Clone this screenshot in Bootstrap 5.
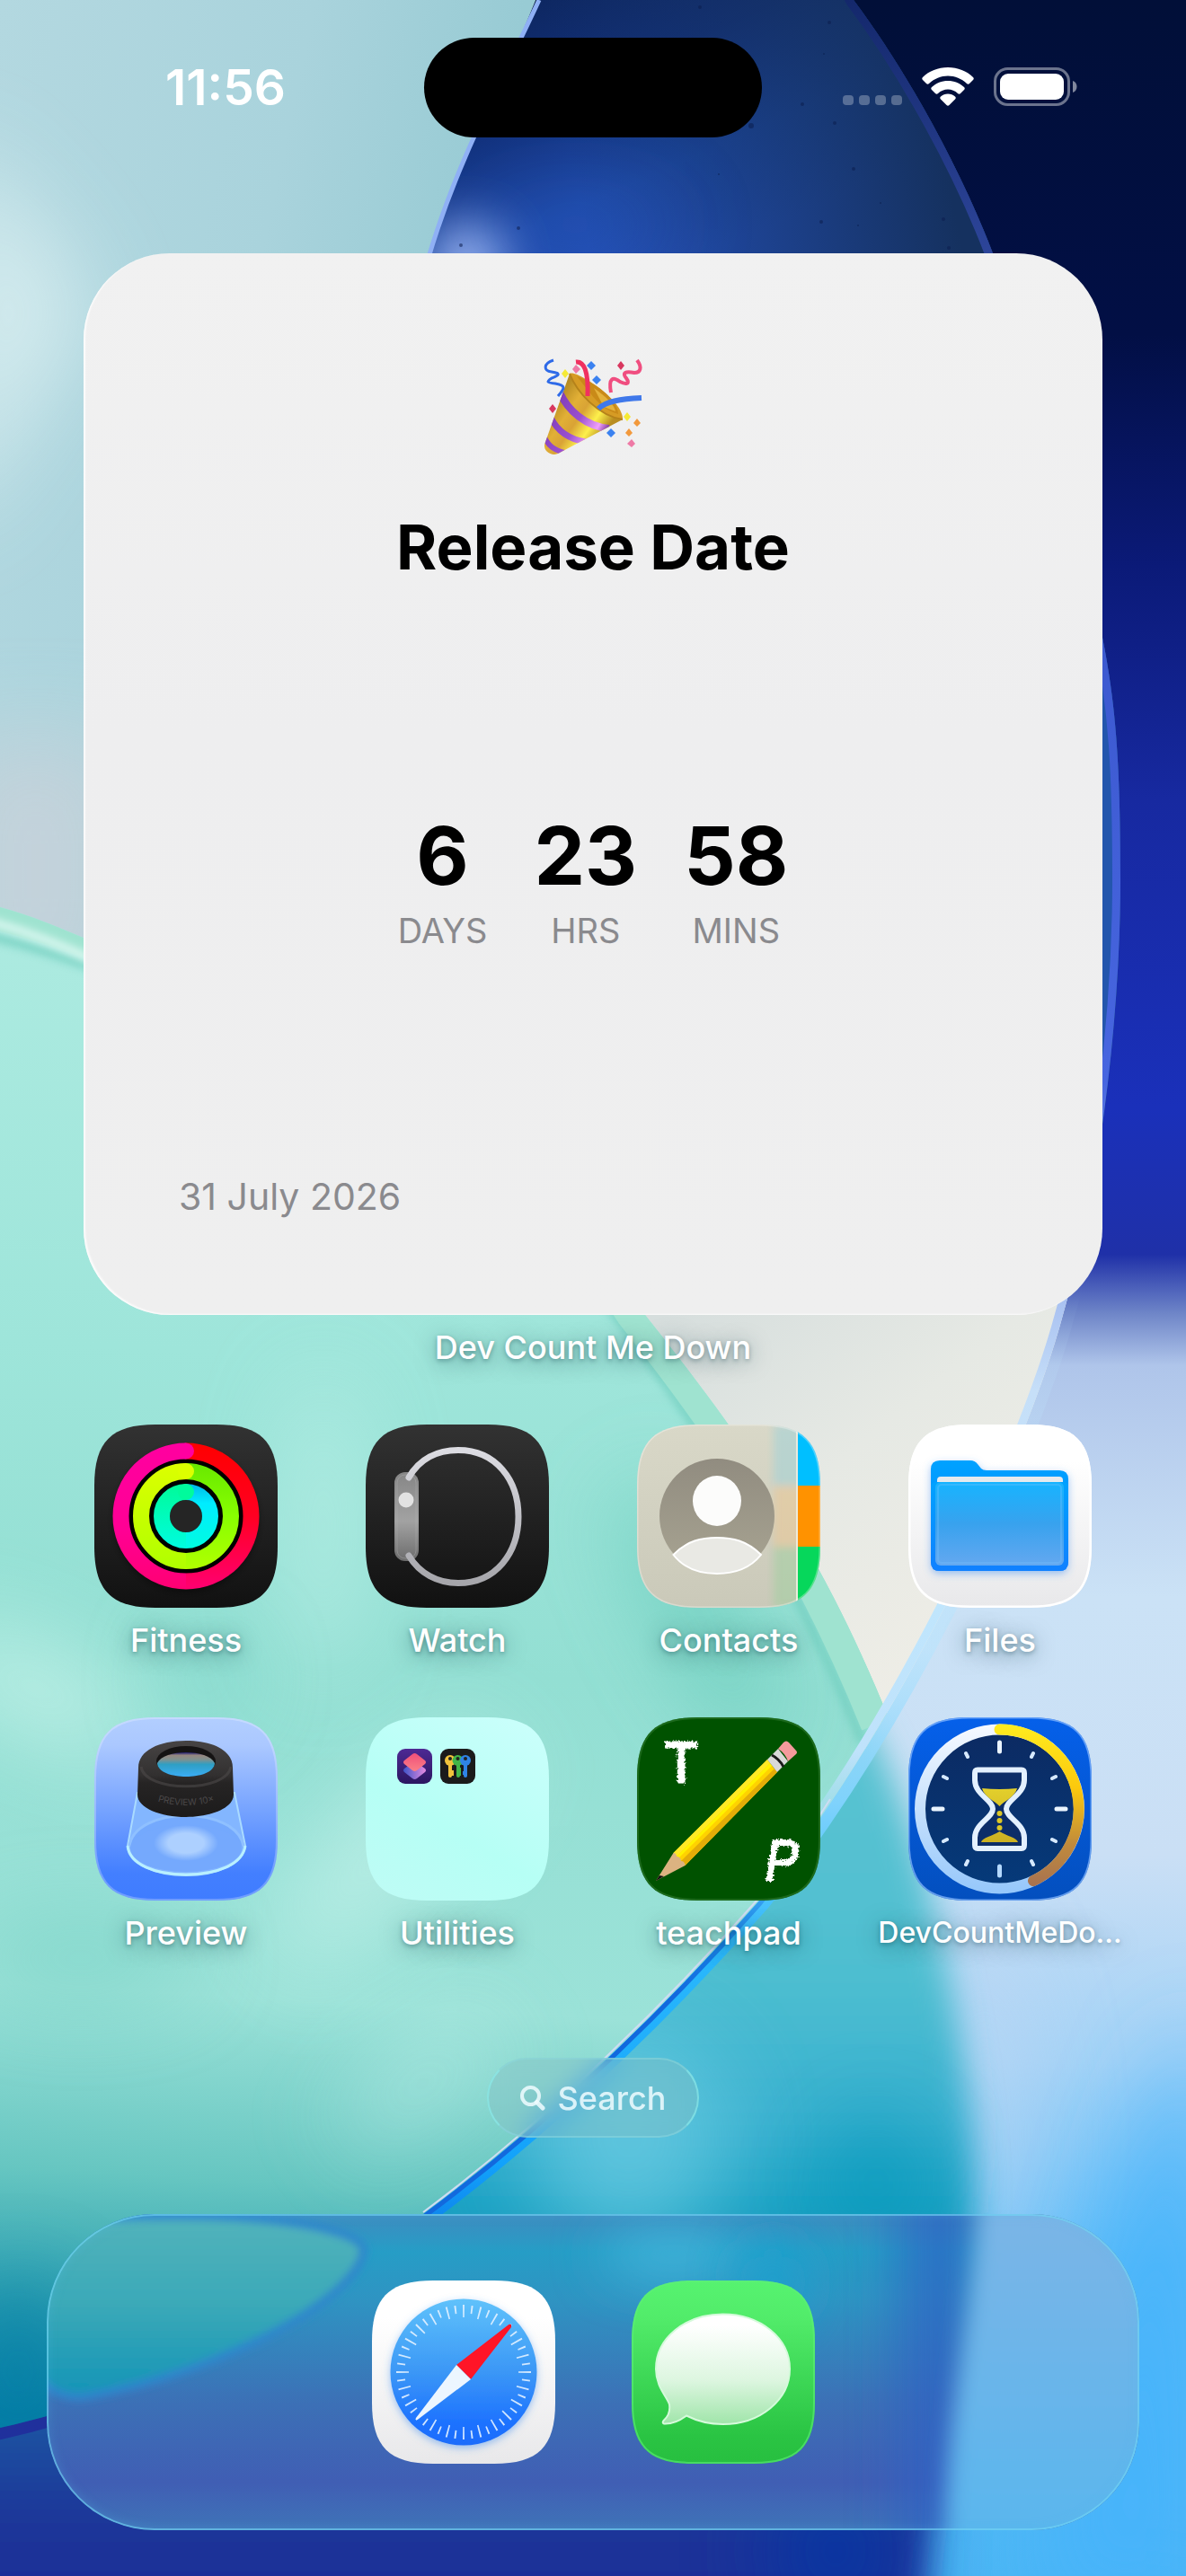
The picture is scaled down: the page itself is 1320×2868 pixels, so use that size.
<!DOCTYPE html>
<html lang="en">
<head>
<meta charset="utf-8">
<meta name="viewport" content="width=device-width, initial-scale=1">
<title>Home Screen</title>
<link href="https://cdn.jsdelivr.net/npm/bootstrap@5.3.0/dist/css/bootstrap.min.css" rel="stylesheet">
<style>
  body { font-family: Inter, "Liberation Sans", sans-serif; background: #1f3799; }
  .home { isolation: isolate; padding-bottom: 51px; overflow: hidden; }
  .wallpaper { position: absolute; inset: 0; width: 100%; height: 100%; z-index: -1; }
  .status { height: 194px; }
  .clock { font-size: 55px; line-height: 64px; font-weight: 600; padding-left: 30px; }
  .island { width: 376px; height: 111px; border-radius: 56px; background: #000; }
  .indicators { padding-right: 30px; }
  .widget {
    margin: 88px 93px 14px; padding: 117px 106px 107px; border-radius: 96px;
    background: linear-gradient(#f1f1f1, #eeeeef 45%, #efefef); color: #000;
    box-shadow: inset 2px -1px 2px rgba(255,255,255,.8);
  }
  .popper { width: 108px; height: 108px; margin-bottom: 60px; overflow: visible; }
  .event-title { font-size: 69px; line-height: 84px; font-weight: 700; margin-bottom: 252px; }
  .counter { gap: 52px; margin-bottom: 247px; }
  .count { font-size: 90px; line-height: 100px; font-weight: 700; margin-bottom: 9px; }
  .unit { font-size: 38px; line-height: 48px; color: #8a8a8e; }
  .event-date { font-size: 41px; line-height: 50px; color: #8a8a8e; }
  .app-label {
    font-size: 36px; line-height: 44px; font-weight: 500; color: #fff; white-space: nowrap;
    text-shadow: 0 2px 5px rgba(0,50,60,.35), 0 4px 22px rgba(0,60,70,.5);
  }
  .app-label-long { font-size: 32px; }
  .apps { padding: 0 56px; margin-top: 64px; row-gap: 64px; }
  .app { gap: 14px; }
  .app-icon { width: 204px; height: 204px; display: block; }
  .search-pill {
    margin-top: 117px; height: 89px; padding: 0 35px; border-radius: 45px; gap: 14px;
    font-size: 36px; font-weight: 500; color: rgba(240,252,255,.85);
    background: rgba(130,190,195,.42); border: 2px solid rgba(140,240,240,.6);
    border-top-color: rgba(140,215,220,.5); border-bottom-color: rgba(140,215,225,.5);
    backdrop-filter: blur(14px);
  }
  .dock {
    margin: 85px 52px 0; padding: 74px 0; gap: 85px; border-radius: 120px; overflow: hidden;
    isolation: isolate;
  }
  .dock-glass { position: absolute; inset: 0; width: 100%; height: 100%; z-index: -1; }
  .dock::after { content: ""; position: absolute; inset: 0; border-radius: inherit; pointer-events: none;
    box-shadow: inset 0 0 0 2px rgba(115,215,245,.6), inset 0 0 14px rgba(90,190,240,.3); }
</style>
</head>
<body>
<div class="home position-relative d-flex flex-column min-vh-100">

  <svg class="wallpaper" viewBox="0 0 1320 2868" preserveAspectRatio="xMidYMid slice" aria-hidden="true">
    <defs>
      <linearGradient id="wOuter" x1="0" y1="0" x2="0" y2="2868" gradientUnits="userSpaceOnUse">
        <stop offset="0" stop-color="#010f38"/><stop offset=".13" stop-color="#020f45"/><stop offset=".22" stop-color="#0b1a78"/>
        <stop offset=".31" stop-color="#1729a0"/><stop offset=".43" stop-color="#1a30ba"/><stop offset=".487" stop-color="#1f30a8"/>
        <stop offset=".51" stop-color="#6f86c8"/><stop offset=".53" stop-color="#afc5ea"/><stop offset=".62" stop-color="#cbe2f6"/>
        <stop offset=".72" stop-color="#cadff5"/><stop offset=".8" stop-color="#a3d2f6"/><stop offset=".88" stop-color="#5cbcf8"/>
        <stop offset="1" stop-color="#4bb6f4"/>
      </linearGradient>
      <linearGradient id="wTeal" x1="0" y1="1900" x2="0" y2="2868" gradientUnits="userSpaceOnUse">
        <stop offset="0" stop-color="#5cc3d2"/><stop offset=".3" stop-color="#4fbfd0"/><stop offset=".48" stop-color="#38b0cf"/>
        <stop offset=".6" stop-color="#149ec0"/><stop offset=".8" stop-color="#1c5aa4"/><stop offset=".93" stop-color="#1f3799"/><stop offset="1" stop-color="#1b2f98"/>
      </linearGradient>
      <linearGradient id="wSky" x1="0" y1="0" x2="560" y2="120" gradientUnits="userSpaceOnUse">
        <stop offset="0" stop-color="#b3d8e0"/><stop offset=".6" stop-color="#a9d3dc"/><stop offset="1" stop-color="#98cbd4"/>
      </linearGradient>
      <linearGradient id="wPetal" x1="560" y1="0" x2="700" y2="320" gradientUnits="userSpaceOnUse">
        <stop offset="0" stop-color="#0d265e"/><stop offset=".35" stop-color="#12307a"/><stop offset=".7" stop-color="#1d49a6"/><stop offset="1" stop-color="#2450b8"/>
      </linearGradient>
      <linearGradient id="wPetalShade" x1="640" y1="200" x2="1040" y2="120" gradientUnits="userSpaceOnUse">
        <stop offset="0" stop-color="#15315f" stop-opacity="0"/><stop offset="1" stop-color="#15315f"/>
      </linearGradient>
      <linearGradient id="wGreen" x1="350" y1="1000" x2="250" y2="2700" gradientUnits="userSpaceOnUse">
        <stop offset="0" stop-color="#aeebe1"/><stop offset=".3" stop-color="#9ee5da"/><stop offset=".5" stop-color="#93dfd3"/>
        <stop offset=".72" stop-color="#9be2d8"/><stop offset=".84" stop-color="#66c6c1"/><stop offset=".93" stop-color="#2b9fb1"/><stop offset="1" stop-color="#0780a6"/>
      </linearGradient>
      <linearGradient id="wCream" x1="740" y1="1464" x2="1050" y2="1850" gradientUnits="userSpaceOnUse">
        <stop offset="0" stop-color="#d6dedd"/><stop offset=".5" stop-color="#e6e9e4"/><stop offset="1" stop-color="#eeede6"/>
      </linearGradient>
      <linearGradient id="wRim" x1="0" y1="0" x2="0" y2="2868" gradientUnits="userSpaceOnUse">
        <stop offset="0" stop-color="#14286c"/><stop offset=".1" stop-color="#2d459a"/><stop offset=".25" stop-color="#3c59d0"/><stop offset=".42" stop-color="#4766e0"/>
        <stop offset=".5" stop-color="#a5bdf0"/><stop offset=".54" stop-color="#c6dff8"/><stop offset=".62" stop-color="#c0e6fd"/><stop offset=".68" stop-color="#bfe2fb"/><stop offset=".72" stop-color="#a5d8fb" stop-opacity="0"/>
      </linearGradient>
      <linearGradient id="wEdge" x1="0" y1="0" x2="0" y2="2868" gradientUnits="userSpaceOnUse">
        <stop offset=".5" stop-color="#c0e6fd" stop-opacity="0"/><stop offset=".64" stop-color="#b8e4fd" stop-opacity=".6"/><stop offset=".7" stop-color="#7fd2fc"/><stop offset=".76" stop-color="#2ab8fc"/>
        <stop offset=".84" stop-color="#12a2fb"/><stop offset=".88" stop-color="#0a6fe0"/><stop offset=".93" stop-color="#20309c"/>
      </linearGradient>
      <linearGradient id="wLine" x1="0" y1="2220" x2="0" y2="2050" gradientUnits="userSpaceOnUse">
        <stop stop-color="#1269dd"/><stop offset="1" stop-color="#1269dd" stop-opacity="0"/>
      </linearGradient>
      <filter id="b12" x="-30%" y="-30%" width="160%" height="160%"><feGaussianBlur stdDeviation="12"/></filter>
      <filter id="b20" x="-30%" y="-30%" width="160%" height="160%"><feGaussianBlur stdDeviation="18"/></filter>
      <filter id="b50" filterUnits="userSpaceOnUse" x="-400" y="-400" width="2120" height="3668"><feGaussianBlur stdDeviation="50"/></filter>
      <filter id="b30" filterUnits="userSpaceOnUse" x="-400" y="-400" width="2120" height="3668"><feGaussianBlur stdDeviation="28"/></filter>
      <filter id="b5" x="-20%" y="-20%" width="140%" height="140%"><feGaussianBlur stdDeviation="4"/></filter>
      <path id="disc" d="M-60 2716 L0 2703 C170 2665 330 2580 471 2465 C610 2362 740 2235 844 2117 C930 2010 1000 1890 1051 1790 C1110 1670 1160 1550 1183 1464 C1225 1320 1247 1130 1247 980 C1247 860 1243 790 1227 710 C1200 560 1160 400 1105 282 C1070 190 1010 80 950 0 L930 -40 L-60 -40 Z"/>
      <path id="pool" d="M-60 995 L0 1010 C30 1018 60 1030 95 1045 C350 1140 600 1310 718 1464 C810 1580 905 1705 990 1915 L1100 2200 L1000 2868 L-60 2868 Z"/>
      <clipPath id="discClip"><use href="#disc"/></clipPath>
      <clipPath id="poolClip"><use href="#pool"/></clipPath>
    </defs>
    <rect width="1320" height="2868" fill="url(#wOuter)"/>
    <path d="M1070 2130 C1170 2200 1170 2500 1100 2600 L1040 2400Z" fill="#c3d8f3" opacity=".6" filter="url(#b50)"/>
    <path d="M1340 2250 L1340 2900 L1150 2900 C1200 2700 1240 2400 1340 2250Z" fill="#46b4fb" filter="url(#b50)"/>
    <path d="M900 1850 C985 1900 1025 2060 1055 2200 C1085 2350 1090 2440 1075 2560 C1060 2700 1030 2800 1028 2930 L-80 2930 L-80 2500 Z" fill="url(#wTeal)" filter="url(#b20)"/>
    <ellipse cx="700" cy="2380" rx="110" ry="120" fill="#69cbe2" opacity=".8" filter="url(#b50)"/>
    <ellipse cx="975" cy="2430" rx="50" ry="70" fill="#0496b9" opacity=".85" filter="url(#b50)"/>
    <ellipse cx="930" cy="2840" rx="70" ry="90" fill="#0139a6" opacity=".75" filter="url(#b50)"/>
    <use href="#disc" fill="none" stroke="url(#wEdge)" stroke-width="26"/>
    <g clip-path="url(#discClip)">
      <path d="M604 -10 C560 95 510 180 478 282 L440 500 L1300 1400 L1300 -10 Z" fill="url(#wPetal)"/>
      <path d="M604 -10 C560 95 510 180 478 282 L1300 1400 L1300 -10 Z" fill="url(#wPetalShade)"/>
      <path d="M1190 600 L1260 600 L1260 1300 L1190 1300Z" fill="#2356ad"/>
      <ellipse cx="520" cy="295" rx="40" ry="46" fill="#b5cbff" opacity=".9" filter="url(#b30)"/>
      <ellipse cx="640" cy="250" rx="120" ry="16" fill="#3b6ae0" opacity=".5" filter="url(#b50)"/>
      <path d="M-20 -20 L604 -20 C560 95 510 180 478 282 L440 500 V1200 H-20Z" fill="url(#wSky)"/>
      <path d="M-60 150 C60 260 100 320 100 360 L-60 600Z" fill="#dcf0f2" opacity=".8" filter="url(#b50)"/>
      <rect x="-60" y="820" width="200" height="300" fill="#c9d2da" opacity=".8" filter="url(#b50)"/>
      <path d="M600 0 C556 95 508 180 476 290" fill="none" stroke="#8fb0f5" stroke-width="5"/>
      <g fill="#0c1e4e" opacity=".55"><circle cx="779" cy="8" r="2"/><circle cx="923" cy="25" r="2"/><circle cx="917" cy="60" r="1"/><circle cx="836" cy="140" r="3"/><circle cx="893" cy="116" r="2"/><circle cx="929" cy="137" r="2"/><circle cx="950" cy="188" r="2"/><circle cx="800" cy="194" r="1"/><circle cx="577" cy="254" r="2"/><circle cx="914" cy="247" r="2"/><circle cx="1050" cy="244" r="2"/><circle cx="955" cy="251" r="1"/><circle cx="1056" cy="276" r="2"/><circle cx="513" cy="273" r="2"/><circle cx="980" cy="226" r="1"/></g>
      <path d="M640 1400 H1300 V2100 H1000 C960 1850 830 1640 640 1400Z" fill="url(#wCream)"/>
      <use href="#pool" fill="url(#wGreen)"/>
      <g clip-path="url(#poolClip)">
        <ellipse cx="40" cy="1880" rx="130" ry="40" fill="#d0f7ef" opacity=".8" filter="url(#b50)" transform="rotate(25 40 1880)"/>
        <ellipse cx="430" cy="2060" rx="170" ry="50" fill="#cbf5ee" opacity=".7" filter="url(#b50)" transform="rotate(-45 430 2060)"/>
        <ellipse cx="360" cy="1700" rx="40" ry="170" fill="#bff2ea" opacity=".65" filter="url(#b50)"/>
        <ellipse cx="230" cy="1870" rx="40" ry="50" fill="#7ad4c7" opacity=".6" filter="url(#b50)"/>
        <ellipse cx="90" cy="2180" rx="130" ry="40" fill="#6fcec1" opacity=".6" filter="url(#b50)"/>
        <ellipse cx="470" cy="2320" rx="110" ry="30" fill="#c0f1ea" opacity=".7" filter="url(#b50)" transform="rotate(-35 470 2320)"/>
        <ellipse cx="780" cy="1800" rx="40" ry="170" fill="#5fc7b6" opacity=".7" filter="url(#b50)" transform="rotate(-28 780 1800)"/>
        <ellipse cx="20" cy="2640" rx="60" ry="100" fill="#067aa6" opacity=".7" filter="url(#b50)"/>
        <path d="M-40 1035 C200 1090 530 1250 685 1464 C780 1590 880 1740 960 1940" fill="none" stroke="#6fcdbd" stroke-width="10" opacity=".7" filter="url(#b5)"/>
        <path d="M-40 1010 C200 1060 570 1250 703 1464 C795 1580 890 1710 975 1920" fill="none" stroke="#9fe3d0" stroke-width="34"/>
        <path d="M-40 1020 C0 1026 60 1048 110 1072" fill="none" stroke="#d5f6ee" stroke-width="10" filter="url(#b5)"/>
      </g>
      <use href="#disc" fill="none" stroke="url(#wRim)" stroke-width="18"/>
    </g>
    <path d="M473 2467 C612 2364 742 2237 846 2119 C872 2087 902 2047 927 2007" fill="none" stroke="url(#wLine)" stroke-width="5"/>
    <path d="M471 2463 C609 2360 739 2233 843 2115 C869 2083 899 2043 924 2003" fill="none" stroke="#cfdcf2" stroke-width="2"/>
  </svg>

  <header class="status d-flex align-items-center text-white">
    <div class="flex-fill w-25 text-center clock">11:56</div>
    <div class="island flex-shrink-0"></div>
    <div class="flex-fill w-25 d-flex justify-content-center indicators">
      <svg width="262" height="44" viewBox="0 0 262 44" role="img" aria-label="Signal, Wi-Fi and battery">
        <g fill="#fff" fill-opacity=".28"><rect x="0" y="31" width="12" height="11" rx="4"/><rect x="18" y="31" width="12" height="11" rx="4"/><rect x="36" y="31" width="12" height="11" rx="4"/><rect x="54" y="31" width="12" height="11" rx="4"/></g>
        <g fill="#fff">
          <path d="M117 0 C128 0 138 4 145 11 C146 12 146 13 145 14 L141 18 C140 19 139 19 138 18 C132 12.500 125 9.500 117 9.500 C109 9.500 102 12.500 96 18 C95 19 94 19 93 18 L89 14 C88 13 88 12 89 11 C96 4 106 0 117 0Z"/>
          <path d="M117 15 C124 15 130 17.500 135 22 C136 23 136 24 135 25 L131 29 C130 30 129 30 128 29 C125 26 121 24.500 117 24.500 C113 24.500 109 26 106 29 C105 30 104 30 103 29 L99 25 C98 24 98 23 99 22 C104 17.500 110 15 117 15Z"/>
          <path d="M117 29.500 C120 29.500 123 30.500 125 32.500 C126 33.500 126 34.500 125 35.500 L118.500 42 C117.500 43 116.500 43 115.500 42 L109 35.500 C108 34.500 108 33.500 109 32.500 C111 30.500 114 29.500 117 29.500Z"/>
          <rect x="175" y="7" width="71" height="29" rx="9"/>
        </g>
        <rect x="169.500" y="1.500" width="82" height="40" rx="14" fill="none" stroke="#fff" stroke-opacity=".42" stroke-width="3"/>
        <path d="M256 15 C262 17 262 26 256 28Z" fill="#fff" fill-opacity=".5"/>
      </svg>
    </div>
  </header>

  <section class="widget d-flex flex-column align-items-center">
    <svg class="popper" viewBox="0 0 108 108" role="img" aria-label="Party popper">
      <defs>
        <linearGradient id="pG" x1="6" y1="55" x2="60" y2="92" gradientUnits="userSpaceOnUse"><stop offset="0" stop-color="#b58a22"/><stop offset=".3" stop-color="#e2b036"/><stop offset=".5" stop-color="#d9a335"/><stop offset=".75" stop-color="#fdf04c"/><stop offset="1" stop-color="#b98d20"/></linearGradient>
        <linearGradient id="pP" x1="6" y1="55" x2="66" y2="90" gradientUnits="userSpaceOnUse"><stop offset="0" stop-color="#7e3cb8"/><stop offset=".5" stop-color="#9a4fd0"/><stop offset=".82" stop-color="#f0a0fa"/><stop offset="1" stop-color="#6d2a90"/></linearGradient>
        <clipPath id="pC"><path d="M28 17 C36 38 60 64 87 68 L15 106 C8 109 -1 104 0 96 Z"/></clipPath>
      </defs>
      <path d="M28 17 C34 12 88 46 87 68 C60 66 34 36 28 17Z" fill="#d69b24"/>
      <path d="M36 20 C60 28 82 48 82 62 C68 58 60 50 52 40Z" fill="#c98a18"/>
      <path d="M55 33 C68 42 78 52 79 59 L66 54Z" fill="#e4b23c"/>
      <path d="M28 17 C36 38 60 64 87 68 L15 106 C8 109 -1 104 0 96 Z" fill="url(#pG)"/>
      <g clip-path="url(#pC)" fill="none" stroke="url(#pP)"><path d="M17 38 C26 58 46 76 72 78" stroke-width="8"/><path d="M7 66 C14 80 26 90 46 93" stroke-width="7"/><path d="M0 88 C5 98 11 102 22 105" stroke-width="6"/></g>
      <path d="M28 17 C36 38 60 64 87 68" fill="none" stroke="#b5821a" stroke-width="2"/>
      <path d="M35 4 C44 3 49 14 48 42" fill="none" stroke="#f03160" stroke-width="5"/><path d="M60 56 C68 48 84 45 108 44" fill="none" stroke="#3f78ea" stroke-width="6"/>
      <path d="M10 2 C-2 6 -1 14 8 15 C20 17 15 19 8 22 C2 26 2 27 12 28 C24 30 23 33 15 42" fill="none" stroke="#2e6ae8" stroke-width="3"/>
      <path d="M103 2 C109 10 107 16 100 16 C90 14 86 16 91 22 C96 29 90 29 84 26 C76 20 71 22 74 38" fill="none" stroke="#f04e80" stroke-width="4"/>
      <g fill="#3b82f0"><path d="M52 3l5 5-5 5-5-5z"/><path d="M58 19l5 5-5 5-5-5z"/><path d="M74 78l5 5-5 5-5-5z"/></g>
      <g fill="#f5ea36"><path d="M23 12l4 5-4 5-4-5z"/><path d="M92 60l4 5-4 5-4-5z"/></g>
      <g fill="#ee7aa6"><path d="M35 7l5 5-5 5-4-5z"/><path d="M97 90l4 5-4 4-5-4z"/></g>
      <g fill="#d8375f"><path d="M85 3l4 5-4 5-4-5z"/><path d="M9 51l4 5-4 5-4-5z"/></g>
      <g fill="#f2993c"><path d="M103 67l4 5-4 4-4-4z"/><path d="M94 78l4 5-4 4-4-4z"/></g>
    </svg>
    <h1 class="event-title">Release Date</h1>
    <div class="counter d-flex text-center">
      <div><div class="count">6</div><div class="unit">DAYS</div></div>
      <div><div class="count">23</div><div class="unit">HRS</div></div>
      <div><div class="count">58</div><div class="unit">MINS</div></div>
    </div>
    <time class="event-date align-self-start" datetime="2026-07-31">31 July 2026</time>
  </section>
  <div class="app-label text-center">Dev Count Me Down</div>

  <main class="apps row row-cols-4 g-0">
    <a href="#" class="app col d-flex flex-column align-items-center text-decoration-none">
      <svg class="app-icon" viewBox="0 0 204 204" aria-hidden="true">
        <defs>
          <path id="tile" d="M0 68C0 19 19 0 68 0H136C185 0 204 19 204 68V136C204 185 185 204 136 204H68C19 204 0 185 0 136Z"/>
          <clipPath id="tileClip"><use href="#tile"/></clipPath>
          <linearGradient id="dark" x2="0" y2="1"><stop stop-color="#323232"/><stop offset="1" stop-color="#111"/></linearGradient>
          <linearGradient id="r1" x1="0" y1="20" x2="0" y2="184" gradientUnits="userSpaceOnUse"><stop stop-color="#ff0000"/><stop offset=".5" stop-color="#ff0022"/><stop offset="1" stop-color="#ff0072"/></linearGradient>
          <linearGradient id="r2" x1="0" y1="20" x2="0" y2="184" gradientUnits="userSpaceOnUse"><stop stop-color="#ff00a0"/><stop offset=".6" stop-color="#ff0094"/><stop offset="1" stop-color="#ff0072"/></linearGradient>
          <linearGradient id="g1" x1="0" y1="43" x2="0" y2="161" gradientUnits="userSpaceOnUse"><stop stop-color="#68e800"/><stop offset=".5" stop-color="#88ff00"/><stop offset="1" stop-color="#b0ff00"/></linearGradient>
          <linearGradient id="g2" x1="0" y1="43" x2="0" y2="161" gradientUnits="userSpaceOnUse"><stop stop-color="#dcff00"/><stop offset="1" stop-color="#b0ff00"/></linearGradient>
          <linearGradient id="c1" x1="0" y1="66" x2="0" y2="138" gradientUnits="userSpaceOnUse"><stop stop-color="#00b8e8"/><stop offset=".3" stop-color="#00ecff"/><stop offset="1" stop-color="#00fce0"/></linearGradient>
          <linearGradient id="c2" x1="0" y1="66" x2="0" y2="138" gradientUnits="userSpaceOnUse"><stop stop-color="#00fb98"/><stop offset="1" stop-color="#00fce0"/></linearGradient>
          <filter id="sh" x="-20%" y="-20%" width="140%" height="150%"><feDropShadow dx="0" dy="4" stdDeviation="4" flood-opacity=".45"/></filter>
        </defs>
        <use href="#tile" fill="url(#dark)"/>
        <circle cx="102" cy="102" r="80" filter="url(#sh)"/>
        <circle cx="102" cy="102" r="18" fill="#252525"/>
        <g fill="none" stroke-width="18">
          <path d="M102 29.500A72.500 72.500 0 0 1 102 174.500" stroke="url(#r1)"/><path d="M102 174.500A72.500 72.500 0 0 1 102 29.500" stroke="url(#r2)"/>
          <path d="M102 52A50 50 0 0 1 102 152" stroke="url(#g1)"/><path d="M102 152A50 50 0 0 1 102 52" stroke="url(#g2)"/>
          <path d="M102 75A27 27 0 0 1 102 129" stroke="url(#c1)"/><path d="M102 129A27 27 0 0 1 102 75" stroke="url(#c2)"/>
        </g>
        <circle cx="102" cy="29.500" r="9" fill="#ff00a0"/><circle cx="102" cy="52" r="9" fill="#dcff00"/><circle cx="102" cy="75" r="9" fill="#00fb9c"/>
      </svg>
      <span class="app-label">Fitness</span>
    </a>
    <a href="#" class="app col d-flex flex-column align-items-center text-decoration-none">
      <svg class="app-icon" viewBox="0 0 204 204" aria-hidden="true">
        <defs><linearGradient id="wb" x2="0" y2="1"><stop stop-color="#868686"/><stop offset=".55" stop-color="#a2a2a2"/><stop offset="1" stop-color="#6c6c6c"/></linearGradient>
        <linearGradient id="ws" x2="0" y2="1"><stop stop-color="#dcdce2"/><stop offset="1" stop-color="#a6a6ab"/></linearGradient></defs>
        <use href="#tile" fill="url(#dark)"/>
        <rect x="32" y="53" width="27" height="99" rx="12" fill="url(#wb)"/>
        <rect x="35" y="56" width="21" height="93" rx="9" fill="none" stroke="#bbb" stroke-opacity=".35"/>
        <path d="M48 59C60 38 80 28.500 103 28.500C145 28.500 170 62 170 102.500C170 143 145 176.500 103 176.500C80 176.500 60 166 48 146" fill="none" stroke="url(#ws)" stroke-width="7" stroke-linecap="round"/>
        <circle cx="45" cy="84" r="8.500" fill="#e2e2e2"/>
      </svg>
      <span class="app-label">Watch</span>
    </a>
    <a href="#" class="app col d-flex flex-column align-items-center text-decoration-none">
      <svg class="app-icon" viewBox="0 0 204 204" aria-hidden="true">
        <defs><linearGradient id="cb" x2="0" y2="1"><stop stop-color="#d9d8c8"/><stop offset="1" stop-color="#cac9b9"/></linearGradient>
        <linearGradient id="cc" x2="0" y2="1"><stop stop-color="#918c80"/><stop offset="1" stop-color="#a8a492"/></linearGradient></defs>
        <g clip-path="url(#tileClip)">
          <rect width="204" height="204" fill="url(#cb)"/>
          <g opacity=".55" filter="url(#b5)"><rect x="152" width="32" height="68" fill="#a0d2d8"/><rect x="152" y="68" width="32" height="68" fill="#ecc894"/><rect x="152" y="136" width="32" height="68" fill="#a0cfa0"/></g>
          <rect x="178" width="26" height="68" fill="#00bfff"/><rect x="178" y="68" width="26" height="68" fill="#ff9200"/><rect x="178" y="136" width="26" height="68" fill="#06d75b"/>
          <rect x="177" width="2" height="204" fill="#eceadc"/>
        </g>
        <circle cx="89" cy="102" r="64" fill="url(#cc)"/>
        <ellipse cx="89" cy="85" rx="27" ry="28" fill="#fcfcfb"/>
        <path d="M40.500 145C56 129 72 126 89 126S122 129 138 145C126 160 108 166 89 166S52 160 40.500 145Z" fill="#e9e9e4" stroke="#fff" stroke-width="2"/>
        <use href="#tile" fill="none" stroke="#fff" stroke-opacity=".3" stroke-width="3" clip-path="url(#tileClip)"/>
      </svg>
      <span class="app-label">Contacts</span>
    </a>
    <a href="#" class="app col d-flex flex-column align-items-center text-decoration-none">
      <svg class="app-icon" viewBox="0 0 204 204" aria-hidden="true">
        <defs><linearGradient id="white" x2="0" y2="1"><stop offset=".2" stop-color="#fff"/><stop offset="1" stop-color="#e8e8ea"/></linearGradient>
        <linearGradient id="fb" x2="0" y2="1"><stop stop-color="#00a2ff"/><stop offset="1" stop-color="#1080ff"/></linearGradient>
        <linearGradient id="ff" x2="0" y2="1"><stop stop-color="#17b4ff"/><stop offset=".5" stop-color="#38a2ee"/><stop offset="1" stop-color="#64a8f0"/></linearGradient>
        <filter id="fsh" x="-20%" y="-20%" width="140%" height="150%"><feDropShadow dx="0" dy="3" stdDeviation="4" flood-color="#3d8cf0" flood-opacity=".5"/></filter></defs>
        <use href="#tile" fill="url(#white)"/>
        <use href="#tile" fill="none" stroke="#fff" stroke-width="5" clip-path="url(#tileClip)"/>
        <path d="M25 50Q25 40 35 40H69Q74 40 77 44L81 49Q83 51 87 51H168Q178 51 178 61V153Q178 163 168 163H35Q25 163 25 153Z" fill="url(#fb)" filter="url(#fsh)"/>
        <path d="M32 66V62Q32 58 36 58H168Q172 58 172 62V66Z" fill="#e6eaee"/>
        <path d="M25 70Q25 64 31 64H172Q178 64 178 70V153Q178 163 168 163H35Q25 163 25 153Z" fill="url(#fb)"/>
        <rect x="30" y="64" width="143" height="93" rx="6" fill="url(#ff)"/>
        <rect x="33" y="67" width="137" height="87" rx="4" fill="none" stroke="#7cc4ff" stroke-opacity=".3" stroke-width="2"/>
      </svg>
      <span class="app-label">Files</span>
    </a>
    <a href="#" class="app col d-flex flex-column align-items-center text-decoration-none">
      <svg class="app-icon" viewBox="0 0 204 204" aria-hidden="true">
        <defs><linearGradient id="pv" x2="0" y2="1"><stop stop-color="#b2ceff"/><stop offset=".15" stop-color="#abc8ff"/><stop offset=".85" stop-color="#437fff"/><stop offset="1" stop-color="#3f7cff"/></linearGradient>
        <radialGradient id="pl"><stop offset=".55" stop-color="#add0ff"/><stop offset="1" stop-color="#add0ff" stop-opacity="0"/></radialGradient>
        <linearGradient id="pb" x2="0" y2="1"><stop stop-color="#474444"/><stop offset=".45" stop-color="#323030"/><stop offset=".55" stop-color="#262424"/><stop offset="1" stop-color="#1c1b1b"/></linearGradient>
        <linearGradient id="pn" x2="0" y2="1"><stop stop-color="#1c1870"/><stop offset=".12" stop-color="#96877f"/><stop offset=".3" stop-color="#7f9190"/><stop offset=".5" stop-color="#2f9fc4"/><stop offset="1" stop-color="#3badf6"/></linearGradient>
        <path id="engrave" d="M66 92Q102 104 138 92"/></defs>
        <use href="#tile" fill="url(#pv)"/>
        <path d="M48 84L37 143C39 164 68 176 102 176S165 164 168 143L156 84Z" fill="#83b6ff" stroke="#aadbff" stroke-width="2"/>
        <path d="M39 144C44 98 160 98 166 144" fill="#74a9fd" stroke="#8fc0ff" stroke-width="3"/>
        <ellipse cx="102" cy="146" rx="62" ry="26" fill="#75a9fd"/>
        <ellipse cx="102" cy="140" rx="36" ry="20" fill="url(#pl)"/>
        <path d="M37 143C39 164 68 175 102 175S165 164 168 143" fill="none" stroke="#b9f0ff" stroke-width="3"/>
        <path d="M49 56C49 37 72 26 102 26S154 37 154 56L155 86C155 101 130 111 102 111S48 101 48 86Z" fill="url(#pb)"/>
        <path d="M52 55C56 84 148 84 152 55" fill="none" stroke="#4d4a4a" stroke-opacity=".6" stroke-width="3"/>
        <ellipse cx="102" cy="49" rx="33" ry="17" fill="#151313"/>
        <path d="M70 51C77 35 127 35 134 51C133 71 71 71 70 51Z" fill="url(#pn)"/>
        <text font-family="Inter, sans-serif" font-size="10" fill="#4b4849"><textPath href="#engrave" startOffset="50%" text-anchor="middle">PREVIEW 10×</textPath></text>
        <use href="#tile" fill="none" stroke="#fff" stroke-opacity=".25" stroke-width="4" clip-path="url(#tileClip)"/>
      </svg>
      <span class="app-label">Preview</span>
    </a>
    <a href="#" class="app col d-flex flex-column align-items-center text-decoration-none">
      <svg class="app-icon" viewBox="0 0 204 204" aria-hidden="true">
        <defs><linearGradient id="ut" x1=".8" y1="0" x2=".2" y2="1"><stop stop-color="#c9fffb"/><stop offset=".6" stop-color="#b6fff5"/><stop offset="1" stop-color="#bdfcf5"/></linearGradient>
        <linearGradient id="s0" x2="0" y2="1"><stop stop-color="#4e2994"/><stop offset="1" stop-color="#2a1660"/></linearGradient>
        <linearGradient id="s1" x2="0" y2="1"><stop stop-color="#f0507a"/><stop offset="1" stop-color="#fb7f86"/></linearGradient>
        <linearGradient id="s2"><stop stop-color="#3f55c8"/><stop offset="1" stop-color="#e58ae0"/></linearGradient></defs>
        <use href="#tile" fill="url(#ut)"/>
        <rect x="35" y="35" width="39" height="39" rx="9" fill="url(#s0)"/>
        <path d="M54.500 49L66 57Q68 59 66 61L57 68Q54.500 70 52 68L43 61Q41 59 43 57Z" fill="url(#s2)"/>
        <path d="M52 41Q54.500 39 57 41L66 48Q68 50 66 52L57 59Q54.500 61 52 59L43 52Q41 50 43 48Z" fill="url(#s1)"/>
        <rect x="83" y="35" width="39" height="39" rx="9" fill="#1b1b1b"/>
        <g fill="#f1c33c"><circle cx="94" cy="48" r="6"/><rect x="92" y="50" width="4" height="17" rx="2"/><rect x="94" y="59" width="4" height="6"/></g>
        <g fill="#43b649"><circle cx="102.500" cy="48" r="6"/><rect x="101" y="50" width="4" height="17" rx="2"/><rect x="103" y="56" width="3" height="9"/></g>
        <g fill="#2f83e6"><circle cx="111" cy="48" r="6"/><rect x="109" y="50" width="4" height="17" rx="2"/><rect x="108" y="60" width="4" height="4"/></g>
        <g fill="#222"><circle cx="94" cy="46" r="2"/><circle cx="102.500" cy="46" r="2"/><circle cx="111" cy="46" r="2"/></g>
      </svg>
      <span class="app-label">Utilities</span>
    </a>
    <a href="#" class="app col d-flex flex-column align-items-center text-decoration-none">
      <svg class="app-icon" viewBox="0 0 204 204" aria-hidden="true">
        <defs><filter id="chalk" x="-20%" y="-20%" width="140%" height="140%"><feTurbulence type="fractalNoise" baseFrequency=".4" numOctaves="2" seed="4"/><feDisplacementMap in="SourceGraphic" scale="6" xChannelSelector="R" yChannelSelector="G"/></filter></defs>
        <use href="#tile" fill="#005200"/>
        <use href="#tile" fill="none" stroke="#2e7a2e" stroke-opacity=".6" stroke-width="4" clip-path="url(#tileClip)"/>
        <g filter="url(#chalk)" fill="#fff" stroke="#fff" font-family="Inter, sans-serif" font-weight="400">
          <text x="49" y="72" font-size="60" stroke-width="3" text-anchor="middle">T</text>
          <text x="161" y="181" font-size="60" stroke-width="2" font-style="italic" text-anchor="middle">P</text>
        </g>
        <path d="M40.500 151L145 47L156 61L53.500 165Z" fill="#ffd300"/>
        <path d="M40.500 151L145 47L148 51L44 155Z" fill="#ffe926"/><path d="M49 160L153 57L156 61L53.500 165Z" fill="#e3ac08"/><path d="M44 155L148 51L150 54L46 157Z" fill="#fff200"/>
        <path d="M21 182L40.500 151C43 151 44 153 44 155C47 155 49 157 49 160C52 160 53.500 162 53.500 165Z" fill="#dcb381"/>
        <path d="M21 182L25 176L30 177Z" fill="#111"/>
        <path d="M145 47L157 35L168 49L156 61Z" fill="#d9d9d9"/><path d="M150 42Q158 46 163 55" fill="none" stroke="#1a1a1a" stroke-width="3"/>
        <path d="M157 35L163 28Q166 25 169 28L177 37Q179 39 177 41L168 49Q165 40 157 35Z" fill="#f49a9c"/>
      </svg>
      <span class="app-label">teachpad</span>
    </a>
    <a href="#" class="app col d-flex flex-column align-items-center text-decoration-none">
      <svg class="app-icon" viewBox="0 0 204 204" aria-hidden="true">
        <defs><linearGradient id="d0" x2="0" y2="1"><stop stop-color="#0560ea"/><stop offset="1" stop-color="#034fbe"/></linearGradient>
        <linearGradient id="d1" x2="0" y2="1"><stop stop-color="#0c2a62"/><stop offset="1" stop-color="#053a7a"/></linearGradient>
        <linearGradient id="d2" x1="0" y1="8" x2="0" y2="196" gradientUnits="userSpaceOnUse"><stop stop-color="#f7faff"/><stop offset="1" stop-color="#95c7fb"/></linearGradient>
        <linearGradient id="d3" x1="0" y1="8" x2="0" y2="186" gradientUnits="userSpaceOnUse"><stop stop-color="#ffec1f"/><stop offset=".4" stop-color="#fbc80d"/><stop offset=".75" stop-color="#c08a3c"/><stop offset="1" stop-color="#a87350"/></linearGradient>
        <linearGradient id="d4" x2="0" y2="1"><stop stop-color="#e3cf2c"/><stop offset="1" stop-color="#cbb022"/></linearGradient></defs>
        <use href="#tile" fill="url(#d0)"/>
        <use href="#tile" fill="none" stroke="#8cbcff" stroke-opacity=".7" stroke-width="3" clip-path="url(#tileClip)"/>
        <circle cx="101.500" cy="102" r="88.500" fill="url(#d1)" stroke="url(#d2)" stroke-width="12"/>
        <path d="M101.500 13.500A88.500 88.500 0 0 1 139 182" fill="none" stroke="url(#d3)" stroke-width="12" stroke-linecap="round"/>
        <g stroke="#eaf4ff" stroke-width="5" stroke-linecap="round"><path d="M101.500 28V38M28 102H38M165 102H175"/><path d="M101.500 166V176" stroke="#b4d9ff"/></g>
        <g stroke="#d6e9ff" stroke-width="4" stroke-linecap="round"><path d="M64 40L66 44M139 40L137 44M39 66L43 68M164 66L160 68M39 138L43 136M164 138L160 136M66 160L64 164M137 160L139 164"/></g>
        <path d="M77 58.500H126Q129 58.500 129 62V70C129 86 109 92 109 102S129 118 129 134V142Q129 146 126 146H77Q74 146 74 142V134C74 118 94 112 94 102S74 86 74 70V62Q74 58.500 77 58.500Z" fill="#0c2d68" stroke="#e3f0ff" stroke-width="6"/>
        <path d="M82 79Q101.500 81 121 79C119 88 107 93 101.500 99C96 93 84 88 82 79ZM81 139C82 134 94 132 101.500 127C109 132 121 134 122 139Z" fill="url(#d4)"/>
        <g fill="#dcc626"><circle cx="101.500" cy="107" r="3"/><circle cx="101.500" cy="115" r="3"/><circle cx="101.500" cy="123" r="3"/></g>
      </svg>
      <span class="app-label app-label-long">DevCountMeDo…</span>
    </a>
  </main>

  <button type="button" class="search-pill align-self-center d-flex align-items-center">
    <svg width="28" height="28" viewBox="0 0 28 28" fill="none" stroke="currentColor" aria-hidden="true"><circle cx="11.500" cy="11.500" r="9.500" stroke-width="4"/><path d="M18.500 18.500L25 25" stroke-width="5" stroke-linecap="round"/></svg>
    Search
  </button>

  <nav class="dock position-relative d-flex justify-content-center" aria-label="Dock">
    <svg class="dock-glass" viewBox="52 2465 1216 352" preserveAspectRatio="none" aria-hidden="true">
      <defs>
        <linearGradient id="dk" x2="0" y2="1"><stop stop-color="#3e8cc0"/><stop offset=".12" stop-color="#269dc6"/><stop offset=".28" stop-color="#2f93c2"/><stop offset=".6" stop-color="#3c70b6"/><stop offset=".85" stop-color="#405eb4"/><stop offset="1" stop-color="#3f74b8"/></linearGradient>
        <linearGradient id="dr" x2="0" y2="1"><stop stop-color="#7db5e6"/><stop offset="1" stop-color="#56b6ee"/></linearGradient>
        <linearGradient id="dt" x2="0" y2="1"><stop stop-color="#53b3bb"/><stop offset=".5" stop-color="#3aa9b8"/><stop offset="1" stop-color="#1494b6"/></linearGradient>
      </defs>
      <rect x="52" y="2465" width="1216" height="352" fill="url(#dk)"/>
      <ellipse cx="750" cy="2510" rx="80" ry="25" fill="#44b6dc" filter="url(#b30)"/>
      <ellipse cx="860" cy="2540" rx="40" ry="50" fill="#1ba3d0" opacity=".8" filter="url(#b30)"/>
      <rect x="1000" y="2400" width="90" height="500" fill="#2e62c4" opacity=".7" filter="url(#b30)"/>
      <path d="M1090 2440H1290V2860H1052C1048 2700 1080 2600 1090 2440Z" fill="url(#dr)" filter="url(#b12)"/>
      <path d="M20 2478C200 2455 395 2470 405 2505C396 2560 250 2640 95 2668C60 2672 40 2650 20 2620Z" fill="url(#dt)" stroke="#2f86cc" stroke-width="9" filter="url(#b5)"/>
    </svg>
    <a href="#" aria-label="Safari">
      <svg class="app-icon" viewBox="0 0 204 204" aria-hidden="true">
        <defs><linearGradient id="sf" x2="0" y2="1"><stop stop-color="#5fc2fb"/><stop offset=".5" stop-color="#3b97f6"/><stop offset=".85" stop-color="#1d72ff"/><stop offset="1" stop-color="#1c6cfb"/></linearGradient></defs>
        <use href="#tile" fill="url(#white)"/>
        <circle cx="102" cy="102" r="81.500" fill="url(#sf)" filter="url(#fsh)"/>
        <g fill="none" stroke="#e2f1ff" stroke-opacity=".9" transform="rotate(-90 102 102)">
          <circle cx="102" cy="102" r="68" stroke-width="14" pathLength="240" stroke-dasharray="1 9" stroke-dashoffset=".5"/>
          <circle cx="102" cy="102" r="70" stroke-width="9" pathLength="240" stroke-dasharray="1 9" stroke-dashoffset="5.500"/>
        </g>
        <path d="M155 49Q153 48 151 50L94 94L110 110L155 52Z" fill="#ff1527"/>
        <path d="M94 94L110 110L52 154Q48 157 49 153Z" fill="#ecf6ff"/>
      </svg>
    </a>
    <a href="#" aria-label="Messages">
      <svg class="app-icon" viewBox="0 0 204 204" aria-hidden="true">
        <defs><linearGradient id="ms" x2="0" y2="1"><stop stop-color="#56f370"/><stop offset=".2" stop-color="#52ec6a"/><stop offset=".85" stop-color="#2ac443"/><stop offset="1" stop-color="#27bf40"/></linearGradient>
        <linearGradient id="mb" x2="0" y2="1"><stop offset=".1" stop-color="#fff"/><stop offset=".6" stop-color="#ddf6e0"/><stop offset="1" stop-color="#a0e5aa"/></linearGradient></defs>
        <use href="#tile" fill="url(#ms)"/>
        <use href="#tile" fill="none" stroke="#5eee78" stroke-opacity=".6" stroke-width="4" clip-path="url(#tileClip)"/>
        <path d="M101.500 37.500C143 37.500 176 64 176 98.500S143 160 101.500 160C86 160 72 156 61 150.500C55 155 45 160 36 159.500C34 159 34.500 157 36 155.500C41 151 43 145 42 138C39 129 27 118 27 98.500C27 64 60 37.500 101.500 37.500Z" fill="url(#mb)" stroke="#d5fadb" stroke-width="2"/>
      </svg>
    </a>
  </nav>
</div>
<script src="https://cdn.jsdelivr.net/npm/bootstrap@5.3.0/dist/js/bootstrap.bundle.min.js"></script>
</body>
</html>
